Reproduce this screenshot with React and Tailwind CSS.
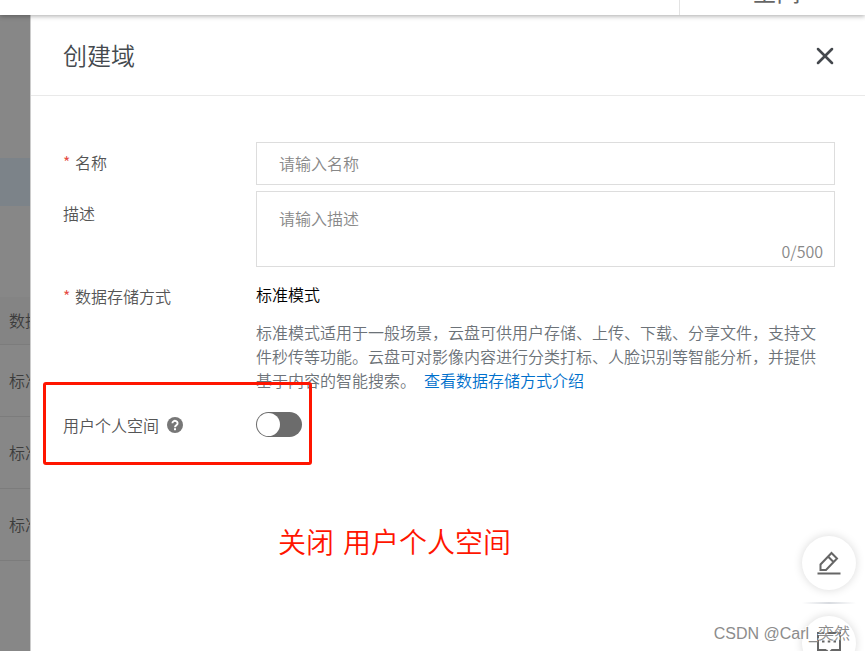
import { X } from "lucide-react";

const rows = ["标准模式", "标准模式", "标准模式"];

function Label({ htmlFor, required, children }) {
  return (
    <label htmlFor={htmlFor} className="flex h-6 items-center whitespace-nowrap text-[#555]">
      {required && <span className="mr-1 w-2 text-[#e5483f]">*</span>}
      {children}
    </label>
  );
}

function TopBar() {
  return (
    <header className="z-10 flex h-[15px] shrink-0 bg-white shadow-[0_1px_5px_rgba(0,0,0,0.35)]">
      <div className="ml-auto flex h-full w-[186px] items-end justify-center overflow-hidden border-l border-[#e3e3e3] pb-[10px]">
        <span className="pl-2 text-2xl font-normal leading-7 text-[#666]">空间</span>
      </div>
    </header>
  );
}

function Backdrop() {
  return (
    <aside className="w-[30px] shrink-0 overflow-hidden whitespace-nowrap bg-[#878787] text-[#3c3c3c]">
      <div className="mt-[143px] h-12 bg-[#7c8389]" />
      <div className="mt-[91px] flex h-12 items-center border-b border-[#7c7c7c] bg-[#848484] pb-0.5 pl-[9px]">数据存储方式</div>
      {rows.map((row, i) => (
        <div key={i} className="flex h-[72px] items-center border-b border-[#7c7c7c] pb-0.5 pl-[9px]">{row}</div>
      ))}
    </aside>
  );
}

function HelpIcon() {
  return (
    <svg viewBox="0 0 16 16" className="size-4" aria-hidden="true">
      <circle cx="8" cy="8" r="8" fill="#777" />
      <path d="M5.4 6.3a2.6 2.4 0 1 1 4.2 1.8C8.600 8.800 8 9 8 10.200" fill="none" stroke="#fff" strokeWidth="1.900" />
      <rect x="7" y="11.200" width="2" height="2" fill="#fff" />
    </svg>
  );
}

function FloatingTools() {
  return (
    <div className="absolute right-[9px] top-[521px] flex flex-col items-center">
      <button aria-label="编辑" className="flex size-[54px] items-center justify-center rounded-full bg-white shadow-[0_0_10px_rgba(0,0,0,0.15)]">
        <svg viewBox="0 0 26 26" className="size-[26px]" fill="none" stroke="#666" strokeWidth="2">
          <path d="M4.500 20v-5.500L15.500 3l5.500 5.500L10 20zM12 6.500l5.500 5.500M1.500 23.500h23" />
        </svg>
      </button>
      <div className="my-3 h-0.5 w-[54px] bg-linear-to-r from-white via-[#d8dbe0] to-white" />
      <button aria-label="消息" className="flex size-[54px] items-center justify-center rounded-full bg-white shadow-[0_0_10px_rgba(0,0,0,0.15)]">
        <svg viewBox="0 0 26 26" className="size-[26px]" fill="none" stroke="#666" strokeWidth="2">
          <path d="M10 20H2V3h22v17h-8l-3 3-3-3" />
          <path d="M6 11.500h2.500M11.750 11.500h2.500M17.500 11.500H20" />
        </svg>
      </button>
    </div>
  );
}

export default function App() {
  return (
    <div className="flex h-screen flex-col overflow-hidden bg-white font-['Noto_Sans_CJK_SC',sans-serif] text-base font-[350]">
      <TopBar />
      <div className="flex min-h-0 flex-1">
        <Backdrop />
        <main className="relative min-w-0 flex-1 border-l border-[#ccc] bg-white">
          <div className="flex h-[81px] items-center justify-between border-b border-[#e9e9e9] pl-8 pr-[26px]">
            <h1 className="text-2xl text-[#44494e]">创建域</h1>
            <button aria-label="关闭" className="pt-0.5">
              <X className="size-7 text-[#44484d]" strokeWidth={2.2} />
            </button>
          </div>

          <form className="grid grid-cols-[193px_minmax(0,1fr)] pl-8 pr-[30px] pt-[46px]">
            <div className="pt-2">
              <Label htmlFor="name" required>名称</Label>
            </div>
            <input
              id="name"
              placeholder="请输入名称"
              className="h-[43px] w-full border border-[#ddd] px-[22px] pb-0.5 placeholder:text-[#888]"
            />

            <div className="pt-4">
              <Label htmlFor="desc">描述</Label>
            </div>
            <div className="relative mt-1.5 h-[76px]">
              <textarea
                id="desc"
                placeholder="请输入描述"
                className="h-full w-full resize-none border border-[#ddd] px-[22px] py-[14px] leading-6 placeholder:text-[#888]"
              />
              <span className="absolute bottom-1 right-3 leading-6 text-[#888]">0/500</span>
            </div>

            <div className="pt-[17px]">
              <Label required>数据存储方式</Label>
            </div>
            <div className="pt-[15px]">
              <p className="leading-6 text-black">标准模式</p>
              <p className="pr-2 pt-[14px] leading-6 text-[#6c7278]">
                标准模式适用于一般场景，云盘可供用户存储、上传、下载、分享文件，支持文件秒传等功能。云盘可对影像内容进行分类打标、人脸识别等智能分析，并提供基于内容的智能搜索。
                <a href="#storage" className="ml-2 text-[#0070cc]">查看数据存储方式介绍</a>
              </p>
            </div>

            <div className="relative col-span-2 grid grid-cols-[193px_minmax(0,1fr)] items-center pt-5">
              <div className="flex items-center gap-2">
                <Label htmlFor="space">用户个人空间</Label>
                <HelpIcon />
              </div>
              <input
                id="space"
                type="checkbox"
                role="switch"
                className="h-[25px] w-[46px] appearance-none rounded-full bg-[#6c6c6c] p-px before:block before:size-[23px] before:rounded-full before:bg-white checked:bg-[#0070cc] checked:before:ml-auto"
              />
              <div className="pointer-events-none absolute -left-5 -top-[10px] h-[83px] w-[269px] rounded-[3px] border-3 border-[#ff1500]" />
            </div>
          </form>

          <p className="flex gap-[9px] pl-[247px] pt-[84px] text-[28px] leading-10 text-[#ff1500]">
            <span>关闭</span>
            <span>用户个人空间</span>
          </p>

          <FloatingTools />
          <p className="absolute bottom-[5px] right-[15px] font-['Liberation_Sans','Noto_Sans_CJK_SC',sans-serif] leading-6 text-[#8c8c8c] [text-shadow:-1px_-1px_0_#fff]">
            CSDN @Carl_奕然
          </p>
        </main>
      </div>
    </div>
  );
}
